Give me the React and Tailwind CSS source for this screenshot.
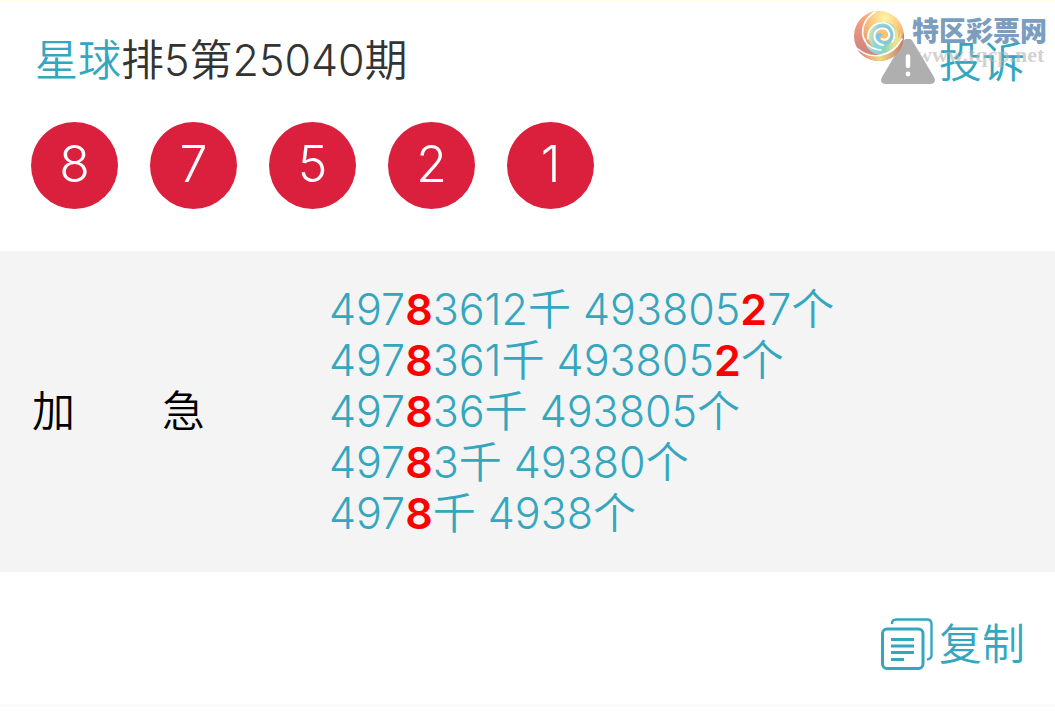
const balls = ["8", "7", "5", "2", "1"];

// digits wrapped in asterisks are the ones that hit
const rows = [
  "497*8*3612千 493805*2*7个",
  "497*8*361千 493805*2*个",
  "497*8*36千 493805个",
  "497*8*3千 49380个",
  "497*8*千 4938个"
];

function Digits({ text }) {
  return text.split("*").map((part, i) =>
    i % 2 ? (
      <b key={i} className="font-semibold text-[#ff0000]">{part}</b>
    ) : (
      <span key={i}>{part}</span>
    )
  );
}

function WarningIcon() {
  return (
    <svg viewBox="0 0 54 46" className="h-[46px] w-[54px] shrink-0" aria-hidden="true">
      <path d="M22.5 2Q27-3.500 31.500 2L53 38Q56 45 49 45H5Q-2 45 1 38Z" fill="#afafaf" />
      <path d="M27 17.500V27" stroke="#fff" strokeWidth="4.500" strokeLinecap="round" />
      <circle cx="27" cy="35" r="2.400" fill="#fff" />
    </svg>
  );
}

function CopyIcon() {
  return (
    <svg viewBox="0 0 52 52" className="size-[52px] shrink-0" fill="none" stroke="#34a7bf" aria-hidden="true">
      <path d="M11 6Q11 1.500 15 1.500H46Q50.500 1.500 50.500 6V37Q50.500 41 46 41.500" strokeWidth="2.400" />
      <rect x="1.500" y="11" width="40.500" height="39.500" rx="4.500" strokeWidth="3" />
      <path d="M10 21.500H33M10 28H33M10 34.500H33M10 41.500H23" strokeWidth="3" />
    </svg>
  );
}

function SiteLogo() {
  return (
    <svg viewBox="0 0 52 52" className="size-[52px] shrink-0" aria-hidden="true">
      <defs>
        <radialGradient id="top" cx="0.620" cy="0.150" r="0.750">
          <stop offset="0" stopColor="#fff6a8" />
          <stop offset="0.450" stopColor="#fbc27c" />
          <stop offset="1" stopColor="#dd8576" />
        </radialGradient>
        <linearGradient id="left" x1="0.500" y1="0" x2="0.300" y2="1">
          <stop offset="0" stopColor="#fbb87c" />
          <stop offset="0.500" stopColor="#ec9380" />
          <stop offset="1" stopColor="#c98480" />
        </linearGradient>
        <linearGradient id="base" x1="0" y1="0" x2="1" y2="0">
          <stop offset="0" stopColor="#d6807b" />
          <stop offset="0.500" stopColor="#efdb7d" />
          <stop offset="1" stopColor="#c9736c" />
        </linearGradient>
        <linearGradient id="cool" x1="0" y1="0" x2="1" y2="0.200">
          <stop offset="0" stopColor="#e9eb92" />
          <stop offset="0.350" stopColor="#8fd3df" />
          <stop offset="0.700" stopColor="#8fd5bd" />
          <stop offset="1" stopColor="#efe48a" />
        </linearGradient>
      </defs>
      <circle cx="26" cy="26" r="25" fill="url(#top)" />
      <path d="M22 1C10 7 6 22 12 32C17 40 26 42 34 39C25 46 11 43 5 37C-3 23 5 4 22 1Z" fill="url(#left)" />
      <path d="M4 39C15 49 34 49 44 36C48 31 50 26 51 22C52 39 42 51 26 51C16 51 8 46 4 39Z" fill="url(#base)" />
      <path d="M12 27C14 36 20 40 28 40C37 40 44 34 48 22C49 34 41 45 28 45C18 44 11 37 12 27Z" fill="url(#cool)" />
      <path d="M16 22C20 11 35 9 42 17C48 25 45 36 37 40C28 44 18 39 16 30Z" fill="url(#cool)" />
      <path d="M21 23C24 14 36 14 40 22C42 30 37 35 31 35C24 35 20 30 21 23Z" fill="#7fc9e3" />
      <path d="M23 25C24 18 34 17 37 23C39 29 34 32 30 31C25 30 27 26 30 25C27 22 24 23 23 25Z" fill="#fbc070" />
      <g fill="none" stroke="#fff" strokeLinecap="round">
        <path d="M22 2C10 9 7 22 12 31C15 37 22 40 28 40" strokeWidth="1.600" />
        <path d="M5 39C18 50 38 48 49 29" strokeWidth="1.600" />
        <path d="M15 29C14 17 25 10 35 14C42 18 43 27 39 32" strokeWidth="1.600" />
        <path d="M29 29C33 31 37 28 36 23C34 17 25 17 22 23C20 29 24 34 30 35" strokeWidth="2" />
      </g>
    </svg>
  );
}

function Watermark() {
  return (
    <div className="pointer-events-none absolute top-2 right-2 flex gap-[7px]">
      <SiteLogo />
      <div className="whitespace-nowrap">
        <p className="font-['Noto_Sans_CJK_SC',sans-serif] text-[27px] leading-[40px] font-black text-[#7b9dbe]">特区彩票网</p>
        <p className="-mt-1 pl-1 font-['Liberation_Serif',serif] text-[22px] leading-[18px] font-bold text-[#b4b4b4]/60">www.tqcp.net</p>
      </div>
    </div>
  );
}

export default function App() {
  return (
    <main className="relative border-t-2 border-[#fffde9] bg-white font-[Inter,'Noto_Sans_CJK_SC',sans-serif] text-[43px] font-[350] text-[#333]">
      <header className="flex items-start justify-between pt-8 pr-[30px] pl-[35px]">
        <h1 className="leading-[52px]">
          <span className="text-[#34a7bf]">星球</span>排5第25040期
        </h1>
        <button type="button" className="flex items-center gap-1 leading-[56px] text-[#34a7bf]">
          <WarningIcon />
          投诉
        </button>
      </header>
      <ul className="mt-8 flex gap-8 pl-[31px] text-[50px] font-light text-white">
        {balls.map((n) => (
          <li key={n} className="flex size-[87px] items-center justify-center rounded-full bg-[#db203d] pb-1 leading-none">
            {n}
          </li>
        ))}
      </ul>

      <section className="mt-[42px] flex items-center bg-[#f4f4f4] py-[33px] pl-8">
        <h2 className="flex w-[297px] gap-[87px] text-black">
          <span>加</span>
          <span>急</span>
        </h2>
        <div className="leading-[51px] text-[#34a7bf]">
          {rows.map((row) => (
            <p key={row}>
              <Digits text={row} />
            </p>
          ))}
        </div>
      </section>

      <footer className="flex justify-end border-b-3 border-[#fafafa] pt-11 pr-[30px] pb-8">
        <button type="button" className="flex items-center gap-1.5 leading-[56px] text-[#34a7bf]">
          <CopyIcon />
          复制
        </button>
      </footer>
      <Watermark />
    </main>
  );
}
